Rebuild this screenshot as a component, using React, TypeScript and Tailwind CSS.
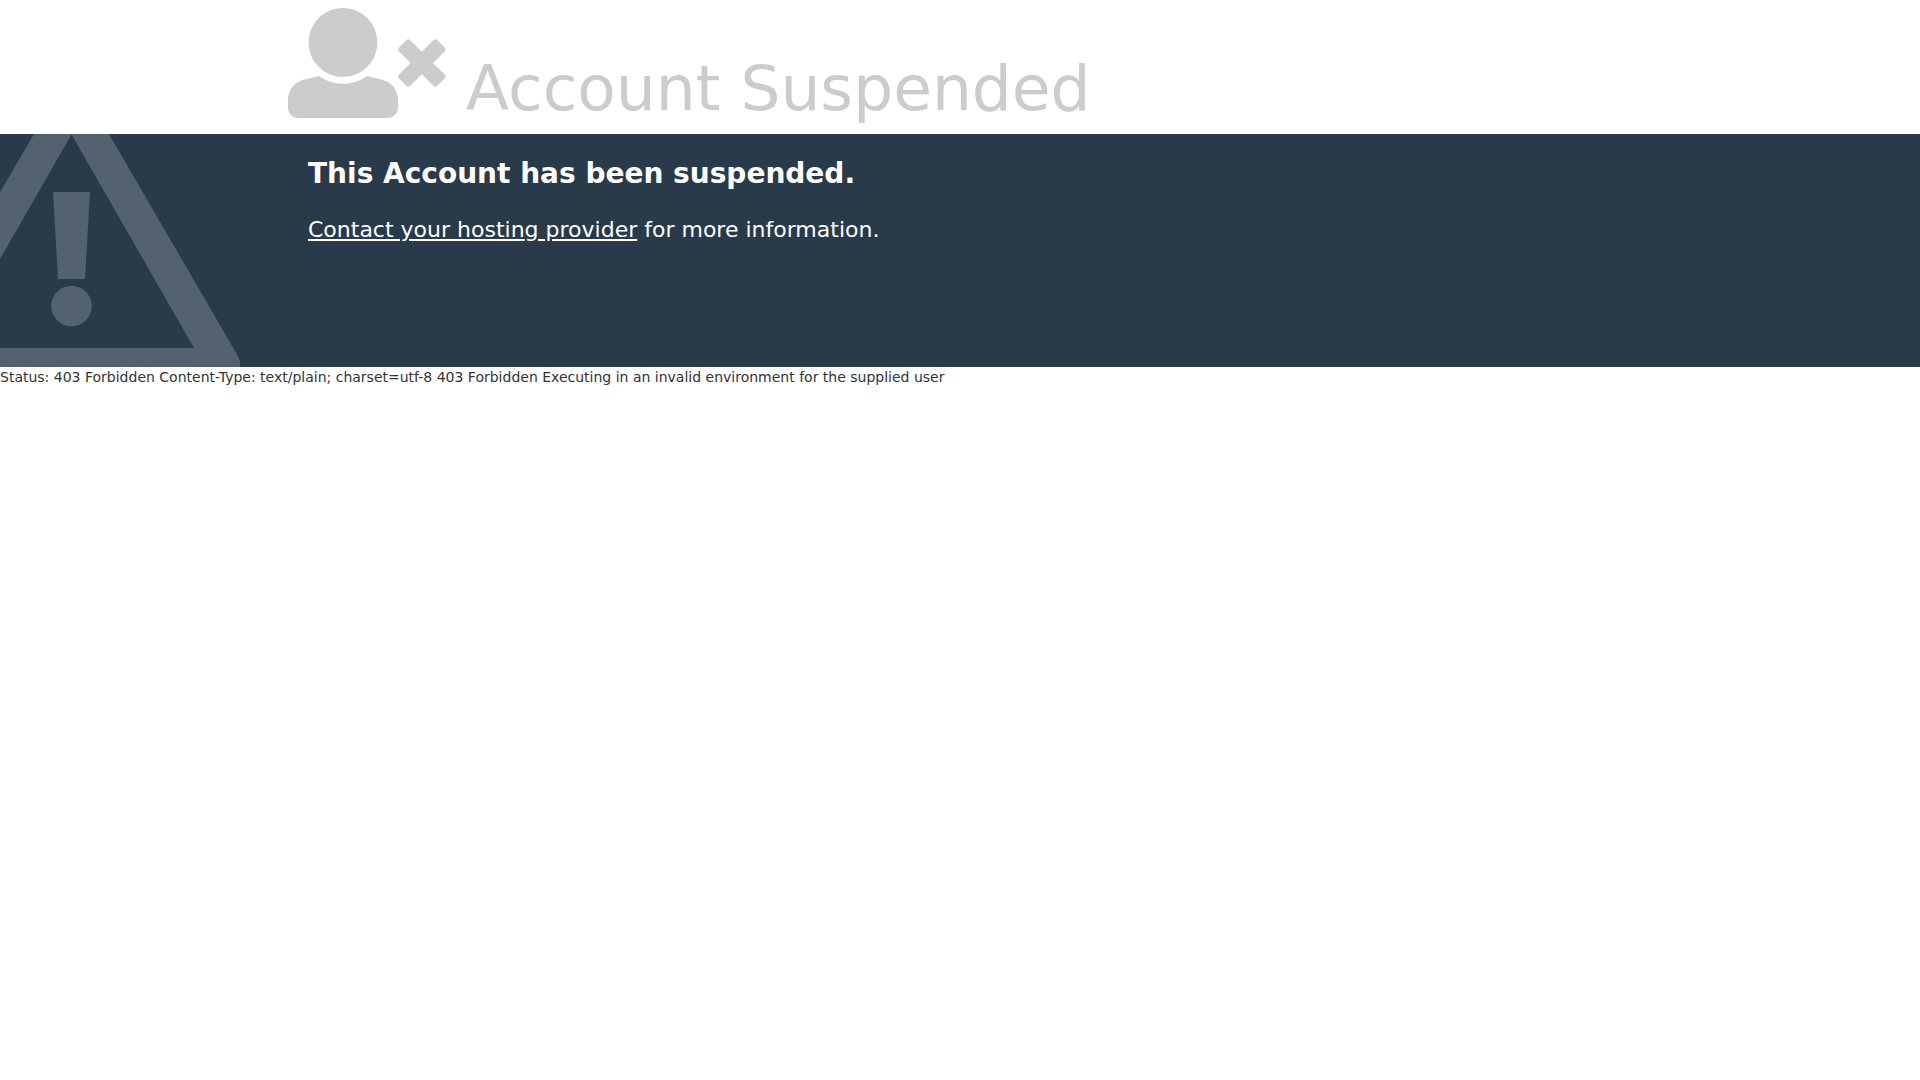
function UserTimesIcon() {
  return (
    <svg
      viewBox="0 0 732 512"
      preserveAspectRatio="xMinYMin meet"
      className="h-[110px] w-[158px] shrink-0 fill-current"
      aria-hidden="true"
    >
      <path d="M256 0c88.366 0 160 71.634 160 160s-71.634 160-160 160S96 248.366 96 160 167.634 0 256 0zm183.283 333.821l-71.313-17.828c-74.923 53.89-165.738 41.864-223.94 0l-71.313 17.828C29.981 344.505 0 382.903 0 426.955V464c0 26.51 21.49 48 48 48h416c26.51 0 48-21.49 48-48v-37.045c0-44.052-29.981-82.45-72.717-93.134z" />
      <g transform="translate(623 256)">
        <rect x="-126" y="-37" width="252" height="74" rx="13" transform="rotate(45)" />
        <rect x="-126" y="-37" width="252" height="74" rx="13" transform="rotate(-45)" />
      </g>
    </svg>
  );
}

function WarningIcon() {
  return (
    <svg
      viewBox="0 0 240 233"
      className="absolute top-0 left-0 h-[233px] w-60 fill-[#54616e]"
      aria-hidden="true"
    >
      <path
        fillRule="evenodd"
        d="M34 0H109L235 217Q240 225 240 229V233H-98V226L34 0ZM71.5 0.5L-51 214H194Z"
      />
      <path d="M53 58H90L85 145H58Z" />
      <circle cx="71.5" cy="172" r="20.3" />
    </svg>
  );
}

export default function App() {
  return (
    <div className="bg-white font-['DejaVu_Sans',sans-serif] text-sm text-[#333333]">
      {/* Header */}
      <header className="mx-auto flex w-[70%] items-end gap-5 pt-2 pb-4 text-[#cccccc]">
        <UserTimesIcon />
        <h1 className="text-[63px] leading-[58px]">Account Suspended</h1>
      </header>

      {/* Message */}
      <section className="relative min-h-[233px] overflow-hidden bg-[#293a4a] text-white">
        <WarningIcon />
        <div className="relative mx-auto w-[70%] px-5 py-5">
          <h2 className="text-[28px] leading-10 font-bold">This Account has been suspended.</h2>
          <p className="mt-5 text-[22px] leading-8">
            <a href="#contact" className="underline">
              Contact your hosting provider
            </a>{" "}
            for more information.
          </p>
        </div>
      </section>

      <p className="leading-5">
        Status: 403 Forbidden Content-Type: text/plain; charset=utf-8 403 Forbidden Executing in an invalid
        environment for the supplied user
      </p>
    </div>
  );
}
